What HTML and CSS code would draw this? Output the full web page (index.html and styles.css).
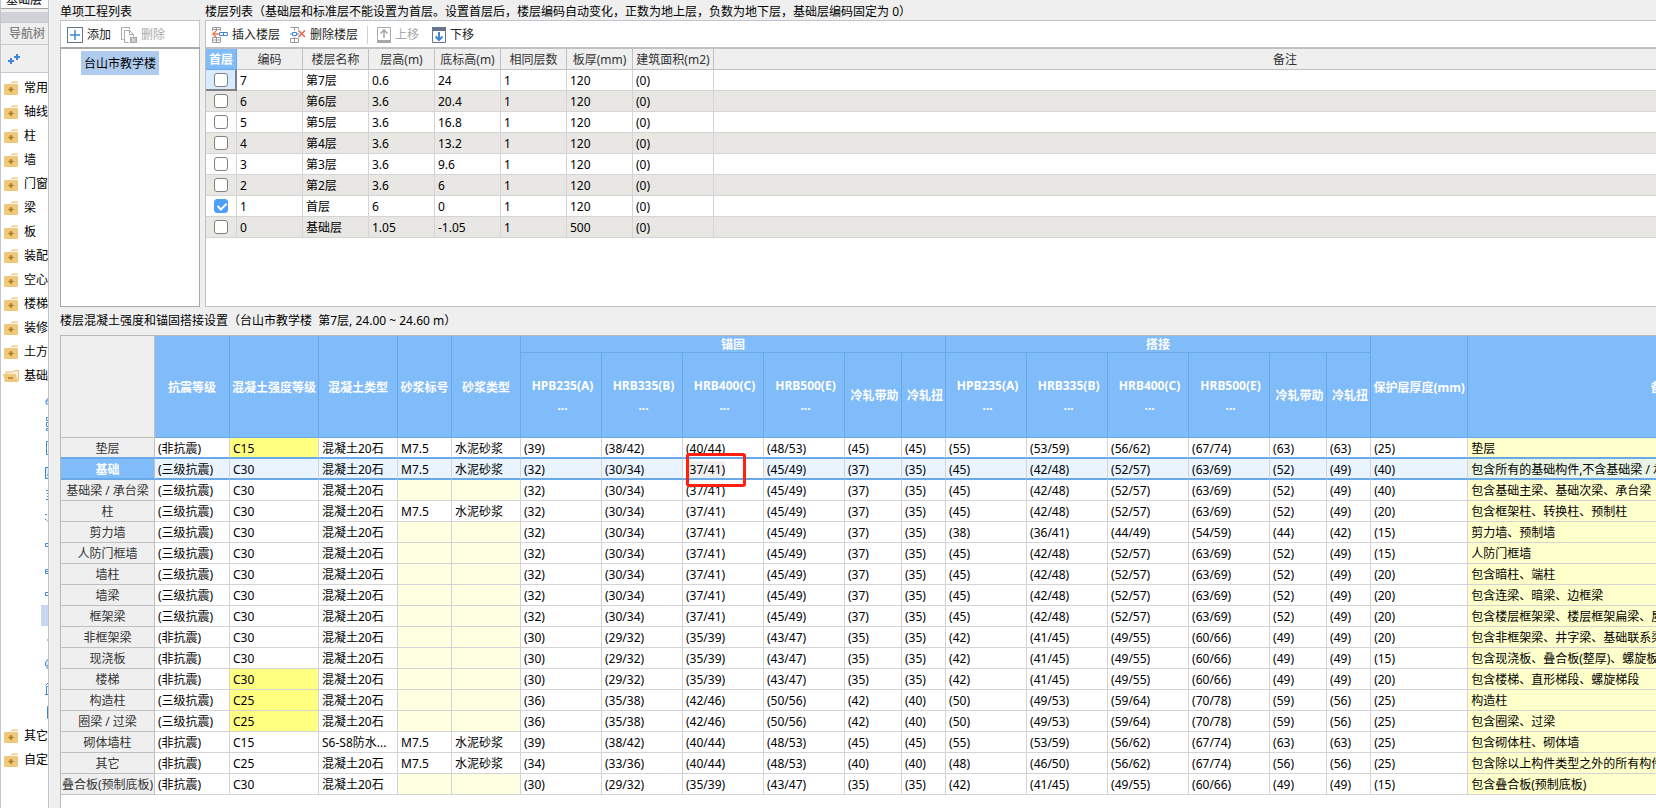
FILE: index.html
```
<!DOCTYPE html>
<html lang="zh-CN">
<head>
<meta charset="utf-8">
<title>楼层设置</title>
<link rel="stylesheet" href="styles.css">
</head>
<body>
<svg class="defs" aria-hidden="true">
  <symbol id="folder" viewBox="0 0 14 14"><path d="M8 0.5h5l1 1.500H7z" fill="#edc77e"/><rect y="3" width="14" height="11" rx="1" fill="#f0c87c"/><path d="M7 6v5M4.500 8.500h5" stroke="#a87a28" stroke-width="1.600"/></symbol>
  <symbol id="open" viewBox="0 0 16 14"><path d="M3 5V3h7l2-1.500h3.500V12" fill="#fdf3dc" stroke="#e8bd6c"/><path d="M0 5h13l2 8H2z" fill="#f0c87c"/><path d="M5 9h5" stroke="#a87a28" stroke-width="1.400"/></symbol>
</svg>
<div class="window">
  <aside class="nav">
    <div class="combo">基础层</div>
    <div class="band"></div>
    <div class="navtitle">导航树</div>
    <div class="navtools"><button aria-label="展开"><svg width="14" height="12" viewBox="0 0 14 12"><path d="M0 8h6M3 5v6M6 4h6M9 1v6" stroke="#3f86d8" stroke-width="2"/></svg></button></div>
    <ul class="tree" id="tree"></ul>
  </aside>
  <main class="main">
    <div class="top">
      <section class="projects">
        <h2>单项工程列表</h2>
        <div class="toolbar">
          <button><svg width="16" height="16" viewBox="0 0 16 16"><rect x=".5" y=".5" width="15" height="15" fill="#fff" stroke="#65768a"/><path d="M3 8h10M8 3v10" stroke="#3f86d8" stroke-width="1.500"/></svg>添加</button>
          <button disabled><svg width="16" height="16" viewBox="0 0 16 16" fill="none" stroke="#a9a9a9"><path d="M2.500 12.500h-2V.500h8v2M3.500 15.500V3.500h5l4 4v2M8.500 3.500v4h4M3.500 15.500h4"/><rect x="9" y="10" width="7" height="6" fill="#a9a9a9" stroke="none"/><path d="M10.500 11l4 4M14.500 11l-4 4" stroke="#fff"/></svg>删除</button>
        </div>
        <div class="projectbox"><span class="project">台山市教学楼</span></div>
      </section>
      <section class="floors">
        <h2>楼层列表（基础层和标准层不能设置为首层。设置首层后，楼层编码自动变化，正数为地上层，负数为地下层，基础层编码固定为 0）</h2>
        <div class="toolbar">
          <button><svg width="16" height="16" viewBox="0 0 16 16" fill="none" stroke="#9b9b9b"><path d="M.500 4V.500h8V4M4.500.500V4M.500 2.500h8M.500 10.500h8v5h-8zM.500 13h8M4.500 10.500v5"/><path d="M1 7h6M4 4L1 7l3 3" stroke="#ef7d55" stroke-width="1.600"/><path d="M7.500 5.500h8v3h-8zM11.500 5.500v3" stroke="#3f86d8"/></svg>插入楼层</button>
          <button><svg width="16" height="16" viewBox="0 0 16 16" fill="none" stroke="#9b9b9b"><path d="M.500.500h8v2M4.500.500v3M.500 11.500h8v4h-8zM4.500 10v5"/><path d="M2.500 5.500h4v3h-4zM0 7h2.500M6.500 7H9" stroke="#3f86d8"/><path d="M8.500 3.500l6.500 6.500M15 3.500L8.500 10" stroke="#e0684f" stroke-width="1.600"/></svg>删除楼层</button>
          <span class="sep"></span>
          <button disabled><svg width="14" height="16" viewBox="0 0 14 16" fill="none"><path d="M.500.500h13v15H.500z" stroke="#a9a9a9"/><path d="M0 13h14v3H0z" fill="#a9a9a9"/><path d="M7 11V3M3.500 6.500L7 3l3.500 3.500" stroke="#a9a9a9" stroke-width="1.600"/></svg>上移</button>
          <button><svg width="14" height="16" viewBox="0 0 14 16" fill="none"><path d="M.500.500h13v15H.500z" stroke="#65768a"/><path d="M0 0h14v4H0z" fill="#65768a"/><path d="M7 5v8M3.500 9.500L7 13l3.500-3.500" stroke="#3f86d8" stroke-width="2"/></svg>下移</button>
        </div>
        <div class="floorbox">
          <table class="floortable">
            <colgroup><col class="w31"><col class="w66"><col class="w66"><col class="w66"><col class="w66"><col class="w66"><col class="w66"><col class="w81"><col></colgroup>
            <thead><tr><th class="on">首层</th><th>编码</th><th>楼层名称</th><th>层高(m)</th><th>底标高(m)</th><th>相同层数</th><th>板厚(mm)</th><th>建筑面积(m2)</th><th>备注</th></tr></thead>
            <tbody id="floors"></tbody>
          </table>
        </div>
      </section>
    </div>
    <section class="settings">
      <h2>楼层混凝土强度和锚固搭接设置（台山市教学楼&nbsp; 第7层, 24.00 ~ 24.60 m）</h2>
      <div class="setbox">
      <table class="settable">
        <colgroup><col class="w94"><col class="w75"><col class="w89"><col class="w79"><col class="w54"><col class="w69"><col class="w81"><col class="w81"><col class="w81"><col class="w81"><col class="w57"><col class="w44"><col class="w81"><col class="w81"><col class="w81"><col class="w81"><col class="w57"><col class="w44"><col class="w97"><col></colgroup>
        <thead>
          <tr class="h1"><td class="corner" rowspan="2"></td><th rowspan="2">抗震等级</th><th rowspan="2">混凝土强度等级</th><th rowspan="2">混凝土类型</th><th rowspan="2">砂浆标号</th><th rowspan="2">砂浆类型</th><th colspan="6">锚固</th><th colspan="6">搭接</th><th rowspan="2">保护层厚度(mm)</th><th rowspan="2">备注</th></tr>
          <tr class="h2"><th>HPB235(A)<br>...</th><th>HRB335(B)<br>...</th><th>HRB400(C)<br>...</th><th>HRB500(E)<br>...</th><th>冷轧带助</th><th>冷轧扭</th><th>HPB235(A)<br>...</th><th>HRB335(B)<br>...</th><th>HRB400(C)<br>...</th><th>HRB500(E)<br>...</th><th>冷轧带助</th><th>冷轧扭</th></tr>
        </thead>
        <tbody id="settings"></tbody>
      </table>
      </div>
    </section>
  </main>
</div>
<script src="app.js"></script>
</body>
</html>
```
FILE: styles.css
```
* { box-sizing: border-box; }
body {
  margin: 0;
  height: 100vh;
  overflow: hidden;
  background: #efefef;
  color: #000;
  font: 12px/20px "Noto Sans", "Noto Sans CJK SC", sans-serif;
}
.defs { position: absolute; width: 0; height: 0; }
.window { display: flex; height: 100vh; }
button { font: inherit; color: inherit; border: 0; background: none; padding: 0; }
h2 { margin: 0; height: 20px; font-size: 12px; font-weight: 400; line-height: 23px; white-space: nowrap; }

.nav {
  flex: none;
  width: 49px;
  display: flex;
  flex-direction: column;
  overflow: hidden;
  white-space: nowrap;
  background: #fff;
  border-left: 1px solid #c0c4cf;
  border-right: 1px solid #c0c4cf;
}
.combo { height: 9px; padding-left: 5px; line-height: 0; overflow: hidden; border-bottom: 1px solid #a0a0a0; }
.band { height: 14px; background: #d0d2d8; border-top: 3px solid #efefef; border-bottom: 1px solid #c4c8d0; }
.navtitle { height: 22px; padding-left: 8px; line-height: 22px; color: #808080; font-weight: 500; background: #efefef; border-bottom: 1px solid #c8c8c8; }
.navtools { height: 28px; padding: 8px 7px; line-height: 12px; background: #efefef; border-bottom: 1px solid #c4c8d0; }
.tree { list-style: none; margin: 0; padding: 3px 0 0; }
.tree li { display: flex; align-items: center; height: 24px; padding-left: 3px; gap: 6px; }
.tree svg { flex: none; display: block; }
.tree .open { padding-left: 2px; gap: 5px; }
.tree .sub { padding-left: 43px; }
.tree .sel { height: 21px; margin: 1px 0 2px 40px; padding-left: 3px; background: #c6d8f0; }

.main { flex: 1; min-width: 0; display: flex; flex-direction: column; padding-left: 11px; overflow: hidden; }
.top { flex: none; display: flex; gap: 5px; height: 307px; }
.projects { flex: none; width: 140px; display: flex; flex-direction: column; }
.floors { flex: none; width: 1653px; display: flex; flex-direction: column; }
.toolbar { display: flex; align-items: center; height: 27px; padding: 1px 0 0 1px; background: #fff; border: 1px solid #c0c4cc; border-bottom: 0; }
.toolbar button { display: flex; align-items: center; gap: 4px; height: 22px; padding: 0 5px; line-height: 20px; color: #222; white-space: nowrap; }
.toolbar button:disabled { color: #a9a9a9; }
.toolbar svg { flex: none; }
.sep { width: 1px; height: 18px; margin: 0 4px; background: #d0d0d0; }
.sep ~ button { margin-right: 3px; }
.projectbox { flex: 1; padding: 2px 20px; background: #fff; border: 1px solid #a9a9a9; border-top-width: 2px; }
.project { display: inline-block; height: 24px; padding: 0 3px; line-height: 25px; background: #afcbee; }
.floorbox { flex: 1; background: #fff; border: 1px solid #c0c0c0; border-top-width: 2px; }

table { table-layout: fixed; border-collapse: separate; border-spacing: 0; }
td, th { height: 21px; padding: 2px 0 0; border-right: 1px solid #d4d4d4; border-bottom: 1px solid #d4d4d4; line-height: 18px; white-space: nowrap; overflow: hidden; }
td { padding-left: 3px; text-align: left; }
.w31 { width: 31px; } .w44 { width: 44px; } .w54 { width: 54px; } .w57 { width: 57px; }
.w66 { width: 66px; } .w69 { width: 69px; } .w75 { width: 75px; } .w79 { width: 79px; }
.w81 { width: 81px; } .w89 { width: 89px; } .w94 { width: 94px; } .w97 { width: 97px; }

.floortable { width: 100%; }
.floortable th { background: #efefef; color: #333; font-weight: 400; border-color: #c0c0c0; }
.floortable th.on { background: #80bbfa; color: #fff; font-weight: 700; border-color: #6aa9e8; }
.floortable tr:nth-child(even) td { background: #e8e7e3; }
.floortable td:first-child { padding: 0; text-align: center; }
.floortable td.cur { background: #d8eaff; border-right: 2px solid #808080; border-bottom: 2px solid #808080; }
.floortable input {
  appearance: none;
  display: block;
  width: 14px;
  height: 14px;
  margin: 0 auto;
  border: 1px solid #808080;
  border-radius: 3px;
  background: #fff;
}
.floortable input:checked { border-color: #4f9ffa; background: #4f9ffa; }
.floortable input:checked::after { content: ""; display: block; width: 4px; height: 7px; margin: 1px 0 0 4px; border: solid #fff; border-width: 0 2px 2px 0; transform: rotate(45deg); }

.settings { flex: 1; display: flex; flex-direction: column; min-height: 0; }
.settings h2 { flex: none; height: 28px; line-height: 27px; }
.setbox { flex: 1; background: #fff; border-top: 1px solid #b8b8b8; border-left: 1px solid #b8b8b8; }
.settable { width: 1797px; }
.settable .corner { background: #efefef; border-color: #c0c0c0; }
.settable thead th { background: #80bbfa; color: #fff; font-weight: 700; border-color: #6aa9e8; }
.settable .h1 th { height: 17px; line-height: 14px; }
.settable .h2 th { height: 85px; padding-left: 3px; line-height: 20px; }
.settable tbody th { background: #efefef; color: #333; font-weight: 400; border-color: #c0c0c0; }
.settable .y { background: #ffff80; }
.settable .e { background: #ffffe1; }
.settable .n { background: #ffffcc; }
.settable .hot th { background: #80bbfa; color: #fff; font-weight: 700; }
.settable .hot td { background: #e9f4fe; }
.settable .hot .n { background: #e9f4e4; }
.settable .before > *, .settable .hot > * { line-height: 17px; border-bottom: 2px solid #6aa9e8; }
.settable .hot .edit { position: relative; overflow: visible; background: #fff; }
.edit span { background: #efefef; }
.mark { position: absolute; left: 3px; top: -6px; width: 60px; height: 34px; border: 3px solid #ff2010; border-radius: 3px; }
```
FILE: app.js
```
const folder = '<svg width="14" height="14"><use href="#folder"/></svg>';
const openFolder = '<svg width="16" height="14"><use href="#open"/></svg>';
const parts = [
  '<path d="M8 5H5L2 9v3h6M2 9h6" />',
  '<path d="M2.500 1.500h6v3h-6zM2.500 6.500h6v4h-6zM2.500 12.500h6v2h-6z"/>',
  '<path d="M8 1.500H2.500v13H8M6 7h3"/>',
  '<path d="M1.500 3.500h7v11h-7zM4.500 3V1.500H7M3 11h5" fill="#dce9f8"/>',
  '<path d="M2 2.500h6M3 5.500h5M3 8.500h5M2 11.500h6"/>',
  '<path d="M1 2.500h7v4M1 7l7 6" stroke-dasharray="2 1"/>',
  '<path d="M8 7.500H1.500v3H8"/>',
  '<path d="M8 13.500H1.500v-4h3V2M4 9.500h4M2 11.500h6"/>',
  '<path d="M8 11.500H1.500v-3h3v-4H8"/>',
  '<path d="M5 4.500h3v2H5z"/>',
  '<path d="M3 8h5M6 6v4"/>',
  '<circle cx="7" cy="8" r="5.500" fill="#dce9f8"/><path d="M3 10l5-4"/>',
  '<path d="M1 14.500h7M2.500 14V6.500H8M1.500 5.500l3-3H8M5.500 7v7"/>',
  '<path d="M8 2.500H3.500v12H8M3 8.500h5"/>'
];
const tree = ['常用', '轴线', '柱', '墙', '门窗', '梁', '板', '装配', '空心', '楼梯', '装修', '土方'];
const item = name => `<li>${folder}${name}</li>`;
document.getElementById('tree').innerHTML =
  tree.map(item).join('') +
  `<li class="open">${openFolder}基础</li>` +
  parts.map((p, i) => `<li class="sub${i === 9 ? ' sel' : ''}"><svg width="16" height="16" fill="none" stroke="#3f86d8">${p}</svg></li>`).join('') +
  ['其它', '自定'].map(item).join('');

const floors = [
  ['7', '第7层', '0.6', '24', '120'], ['6', '第6层', '3.6', '20.4', '120'],
  ['5', '第5层', '3.6', '16.8', '120'], ['4', '第4层', '3.6', '13.2', '120'],
  ['3', '第3层', '3.6', '9.6', '120'], ['2', '第2层', '3.6', '6', '120'],
  ['1', '首层', '6', '0', '120'], ['0', '基础层', '1.05', '-1.05', '500']
];
document.getElementById('floors').innerHTML = floors.map((f, i) =>
  `<tr><td${i ? '' : ' class="cur"'}><input type="checkbox" aria-label="${f[1]}"${i === 6 ? ' checked' : ''}></td>` +
  [f[0], f[1], f[2], f[3], '1', f[4], '(0)', ''].map(c => `<td>${c}</td>`).join('') + '</tr>').join('');

// Anchorage and lap lengths shared by rows of the same strength and seismic grade
const A = '39 38/42 40/44 48/53 45 45 55 53/59 56/62 67/74 63 63';
const B = '32 30/34 37/41 45/49 37 35 45 42/48 52/57 63/69 52 49';
const W = '32 30/34 37/41 45/49 37 35 38 36/41 44/49 54/59 44 42';
const C = '30 29/32 35/39 43/47 35 35 42 41/45 49/55 60/66 49 49';
const D = '36 35/38 42/46 50/56 42 40 50 49/53 59/64 70/78 59 56';
const E = '34 33/36 40/44 48/53 40 40 48 46/50 56/62 67/74 56 56';
const rows = [
  ['垫层', '非', 'C15', 1, 1, A, 25, '垫层'],
  ['基础', '三级', 'C30', 0, 1, B, 40, '包含所有的基础构件,不含基础梁 / 承台梁'],
  ['基础梁 / 承台梁', '三级', 'C30', 0, 0, B, 40, '包含基础主梁、基础次梁、承台梁'],
  ['柱', '三级', 'C30', 0, 1, B, 20, '包含框架柱、转换柱、预制柱'],
  ['剪力墙', '三级', 'C30', 0, 0, W, 15, '剪力墙、预制墙'],
  ['人防门框墙', '三级', 'C30', 0, 0, B, 15, '人防门框墙'],
  ['墙柱', '三级', 'C30', 0, 0, B, 20, '包含暗柱、端柱'],
  ['墙梁', '三级', 'C30', 0, 0, B, 20, '包含连梁、暗梁、边框梁'],
  ['框架梁', '三级', 'C30', 0, 0, B, 20, '包含楼层框架梁、楼层框架扁梁、屋面框架梁'],
  ['非框架梁', '非', 'C30', 0, 0, C, 20, '包含非框架梁、井字梁、基础联系梁'],
  ['现浇板', '非', 'C30', 0, 0, C, 15, '包含现浇板、叠合板(整厚)、螺旋板'],
  ['楼梯', '非', 'C30', 1, 0, C, 20, '包含楼梯、直形梯段、螺旋梯段'],
  ['构造柱', '三级', 'C25', 1, 0, D, 25, '构造柱'],
  ['圈梁 / 过梁', '三级', 'C25', 1, 0, D, 25, '包含圈梁、过梁'],
  ['砌体墙柱', '非', 'C15', 0, 1, A, 25, '包含砌体柱、砌体墙'],
  ['其它', '非', 'C25', 0, 1, E, 25, '包含除以上构件类型之外的所有构件'],
  ['叠合板(预制底板)', '非', 'C30', 0, 0, C, 15, '包含叠合板(预制底板)']
];
document.getElementById('settings').innerHTML = rows.map((r, i) => {
  const [name, grade, strength, yellow, mortar, values, cover, note] = r;
  const type = name === '砌体墙柱' ? 'S6-S8防水...' : '混凝土20石';
  const cells = values.split(' ').map((v, k) => i === 1 && k === 2
    ? `<td class="edit"><span>(${v})</span><div class="mark"></div></td>` : `<td>(${v})</td>`).join('');
  const m = mortar ? '<td>M7.5</td><td>水泥砂浆</td>' : '<td class="e"></td><td class="e"></td>';
  return `<tr class="${['before', 'hot'][i] || ''}"><th>${name}</th><td>(${grade}抗震)</td><td${yellow ? ' class="y"' : ''}>${strength}</td><td>${type}</td>${m}${cells}<td>(${cover})</td><td class="n">${note}</td></tr>`;
}).join('');
```
